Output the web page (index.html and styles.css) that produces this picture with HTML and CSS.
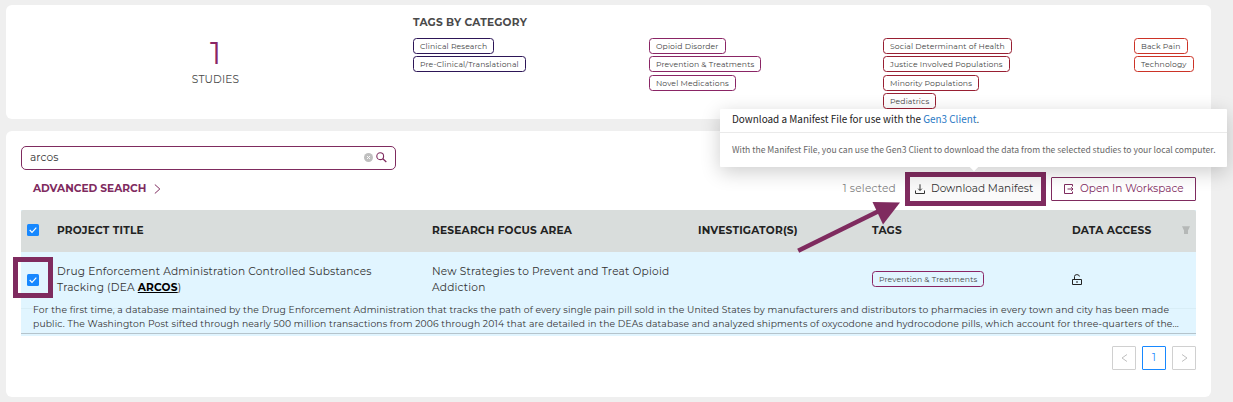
FILE: index.html
```html
<!DOCTYPE html>
<html lang="en">
<head>
<meta charset="utf-8">
<title>Discovery</title>
<link rel="stylesheet" href="styles.css">
</head>
<body>
<main class="page">
  <section class="panel summary">
    <div class="stat">
      <div class="stat-number">1</div>
      <div class="stat-label">STUDIES</div>
    </div>
    <div class="categories">
      <h2 class="cat-title">TAGS BY CATEGORY</h2>
      <div class="cat-grid">
        <div class="cat navy"><span class="tag">Clinical Research</span><span class="tag">Pre-Clinical/Translational</span></div>
        <div class="cat plum"><span class="tag">Opioid Disorder</span><span class="tag">Prevention &amp; Treatments</span><span class="tag">Novel Medications</span></div>
        <div class="cat wine"><span class="tag">Social Determinant of Health</span><span class="tag">Justice Involved Populations</span><span class="tag">Minority Populations</span><span class="tag">Pediatrics</span></div>
        <div class="cat red"><span class="tag">Back Pain</span><span class="tag">Technology</span></div>
      </div>
    </div>
  </section>

  <section class="panel results">
    <div class="search">
      <span class="query">arcos</span>
      <svg width="9" height="9" viewBox="0 0 9 9"><circle cx="4.5" cy="4.5" r="4.5" fill="#bfbfbf"/><path d="M3 3l3 3M6 3l-3 3" stroke="#fff" stroke-width=".9"/></svg>
      <svg class="lens" width="11" height="11" viewBox="0 0 11 11" fill="none" stroke="#7f2b5f"><circle cx="4.2" cy="4.2" r="3.4" stroke-width="1.1"/><path d="M6.8 6.8L10.3 10" stroke-width="1.3"/></svg>
    </div>
    <div class="toolbar">
      <div class="advanced"><span>ADVANCED SEARCH</span><svg width="7" height="10" viewBox="0 0 7 10" fill="none" stroke="#7f2b5f" stroke-width="1"><path d="M.8.5L5.8 5 .8 9.5"/></svg></div>
      <div class="actions">
        <span class="selected">1 selected</span>
        <div class="download">
          <svg width="10" height="10" viewBox="0 0 10 10" fill="none" stroke="#333" stroke-width="1"><path d="M.5 6.500v3h9v-3M5 .3v6M3.2 4.7L5 6.500l1.800-1.800"/></svg>
          <span>Download Manifest</span>
          <div class="popover">
            <div class="pop-title">Download a Manifest File for use with the <a>Gen3 Client</a>.</div>
            <div class="pop-body"><span>With the Manifest File, you can use the Gen3 Client to download the data from the selected studies to your local computer.</span></div>
          </div>
          <svg class="arrow" width="106" height="54" viewBox="0 0 106 54"><path d="M1.200 49.800L84 9" stroke="#7f2b5f" stroke-width="4.600"/><path d="M75.500 1L103 1.500 86 23.500z" fill="#7f2b5f"/></svg>
        </div>
        <div class="workspace">
          <svg width="10" height="10" viewBox="0 0 10 10" fill="none" stroke="#7f2b5f" stroke-width="1"><path d="M8.500 2.500v-2h-8v9h8v-2M3.500 5h5.500M7.200 3.200L9 5 7.200 6.800"/></svg>
          <span>Open In Workspace</span>
        </div>
      </div>
    </div>

    <div class="table">
      <div class="row head">
        <div class="cell check"><span class="box"><svg width="12" height="12" viewBox="0 0 12 12"><path d="M2.700 6l2.300 2.300 4.300-4.600" fill="none" stroke="#fff" stroke-width="1.200"/></svg></span></div>
        <div class="cell">PROJECT TITLE</div>
        <div class="cell">RESEARCH FOCUS AREA</div>
        <div class="cell">INVESTIGATOR(S)</div>
        <div class="cell">TAGS</div>
        <div class="cell access"><span>DATA ACCESS</span><svg width="8" height="8" viewBox="0 0 8 8" fill="#b5b8b7"><path d="M0 .3h8L6 4.500V8H2V4.500z"/></svg></div>
      </div>
      <div class="row study">
        <div class="cell check marked"><span class="box"><svg width="12" height="12" viewBox="0 0 12 12"><path d="M2.700 6l2.300 2.300 4.300-4.600" fill="none" stroke="#fff" stroke-width="1.200"/></svg></span></div>
        <div class="cell">Drug Enforcement Administration Controlled Substances<br>Tracking (DEA <b>ARCOS</b>)</div>
        <div class="cell">New Strategies to Prevent and Treat Opioid<br>Addiction</div>
        <div class="cell"></div>
        <div class="cell plum"><span class="tag">Prevention &amp; Treatments</span></div>
        <div class="cell"><svg class="lock" width="10" height="11" viewBox="0 0 10 11" fill="none" stroke="#222"><path d="M.5 5.500h9v5h-9zM2.500 5.500V2.500Q2.500.6 4.900.6T7.400 2.500"/><path d="M5 7v2"/></svg></div>
      </div>
      <div class="description"><p>For the first time, a database maintained by the Drug Enforcement Administration that tracks the path of every single pain pill sold in the United States by manufacturers and distributors to pharmacies in every town and city has been made<br><span class="tight">public. The Washington Post sifted through nearly 500 million transactions from 2006 through 2014 that are detailed in the DEAs database and analyzed shipments of oxycodone and hydrocodone pills, which account for three-quarters of the...</span></p></div>
    </div>

    <div class="pager">
      <span class="pg"><svg width="7" height="8" viewBox="0 0 7 8" fill="none" stroke="#bfbfbf"><path d="M6 .5L1 4l5 3.500"/></svg></span>
      <span class="pg current">1</span>
      <span class="pg"><svg width="7" height="8" viewBox="0 0 7 8" fill="none" stroke="#bfbfbf"><path d="M1 .5L6 4 1 7.500"/></svg></span>
    </div>
  </section>
</main>
</body>
</html>
```
FILE: styles.css
```css
*, *::before, *::after { box-sizing: border-box; }
body {
  margin: 0;
  background: #efefef;
  font-family: Montserrat, Inter, "Open Sans", sans-serif;
  font-size: 10.6px;
  color: #333;
  white-space: nowrap;
  overflow: hidden;
}
svg { display: block; flex: none; }
.page { height: 402px; padding: 5px 22px 5px 6px; display: flex; flex-direction: column; gap: 12px; }
.panel { background: #fff; border-radius: 6px; }

.summary { height: 114px; display: flex; }
.stat { width: 407px; padding: 32px 0 0 12px; display: flex; flex-direction: column; align-items: center; }
.stat-number { height: 33px; font-size: 31px; line-height: 33px; color: #8a2565; }
.stat-label { line-height: 20px; color: #4a4a4a; letter-spacing: .15px; }
.categories { flex: 1; padding-top: 11px; }
.cat-title { margin: 0; font-size: 10.6px; line-height: 14px; color: #4a4a4a; letter-spacing: .2px; }
.cat-grid { display: grid; grid-template-columns: 236px 234px 251px 1fr; margin-top: 8px; }
.cat { display: flex; flex-direction: column; align-items: flex-start; gap: 2.300px; }
.tag {
  display: block;
  height: 16px;
  padding: 0 6px;
  border: 1px solid #8a2565;
  border-radius: 3.500px;
  font-size: 7.700px;
  line-height: 15.600px;
  letter-spacing: .12px;
  color: #444;
}
.navy .tag { border-color: #2d1657; }
.wine .tag { border-color: #981f32; }
.red .tag { border-color: #cc3327; }

.results { height: 266px; padding: 15px 15px 0; }
.search {
  width: 375px; height: 24px;
  border: 1px solid #7f2b5f; border-radius: 5px;
  padding: 0 8px;
  display: flex; align-items: center;
}
.search svg { margin-bottom: 1px; }
.query { flex: 1; letter-spacing: .1px; line-height: 14px; }
.lens { margin-left: 3px; }
.toolbar { height: 40px; display: flex; justify-content: space-between; }
.advanced { padding: 0 0 3px 12px; display: flex; align-items: center; gap: 8px; color: #7f2b5f; font-weight: 700; }
.actions { display: flex; align-items: center; height: 38px; }
.selected { color: #808080; font-size: 10.600px; letter-spacing: .2px; margin-right: 9px; padding-bottom: 1px; }
.download {
  position: relative;
  width: 141px; height: 34px;
  border: 5px solid #7f2b5f;
  background: #fafafa;
  display: flex; align-items: center; gap: 6px;
  padding: 0 0 1px 5px;
  font-size: 10.500px;
  margin-right: 5px;
}
.workspace {
  width: 145px; height: 24px;
  border: 1px solid #7f2b5f; border-radius: 1px;
  display: flex; align-items: center; gap: 6px;
  padding: 0 0 1px 12px;
  color: #7f2b5f; font-size: 10.500px;
}
.popover {
  position: absolute;
  left: -190px; top: -68px;
  width: 507px; height: 58px;
  background: #fff;
  border-radius: 1px;
  box-shadow: 0 5px 20px rgba(0,0,0,.2);
  font-family: "Source Sans Pro", "Noto Sans CJK SC", sans-serif;
}
.popover::after {
  content: "";
  position: absolute;
  left: 251px; bottom: -3px;
  width: 6px; height: 6px;
  background: #fff;
  transform: rotate(45deg);
}
.pop-title { height: 24px; padding-left: 12px; border-bottom: 1px solid #eaeaea; font-size: 9.940px; line-height: 20px; color: #222; }
.pop-title a { color: #2878c4; }
.pop-body { padding-left: 12px; font-size: 8.580px; line-height: 33px; color: #666; }
.arrow { position: absolute; left: -113px; top: 24px; }

.table { background: #e1f5ff; height: 126px; }
.row { display: grid; grid-template-columns: 36px 375px 266px 174px 200px 124px; letter-spacing: .2px; }
.head { height: 42px; align-items: center; padding-bottom: 2px; background: #d9dddc; font-weight: 700; color: #222; border-radius: 2px 2px 0 0; }
.check { padding-left: 6px; }
.box { display: block; width: 12px; height: 12px; background: #1788ff; border-radius: 1.500px; }
.access { display: flex; justify-content: space-between; align-items: center; padding-right: 6px; }
.study { height: 56px; align-items: center; line-height: 16px; }
.marked { position: relative; }
.marked::before {
  content: "";
  position: absolute;
  left: -8px; top: -17px;
  width: 40px; height: 41px;
  border: 5px solid #7f2b5f;
}
.study .tag { width: max-content; margin-bottom: 2px; }
.lock { margin-bottom: 1px; }
.study b { color: #000; text-decoration: underline; }
.description {
  height: 26px;
  padding-left: 12px;
  border-bottom: 1px solid #b5c4cc;
  border-top: 1px solid #d8edf6;
  font-size: 9.200px; line-height: 14px;
  letter-spacing: .162px;
}
.description p { margin: -6px 0 0; }
.tight { letter-spacing: .15px; }
.pager { display: flex; justify-content: flex-end; gap: 6px; margin-top: 10px; }
.pg { width: 24px; height: 24px; border: 1px solid #d0d0d0; border-radius: 1px; display: flex; align-items: center; justify-content: center; color: #1788ff; }
.current { border-color: #1788ff; padding-bottom: 2px; }
```
